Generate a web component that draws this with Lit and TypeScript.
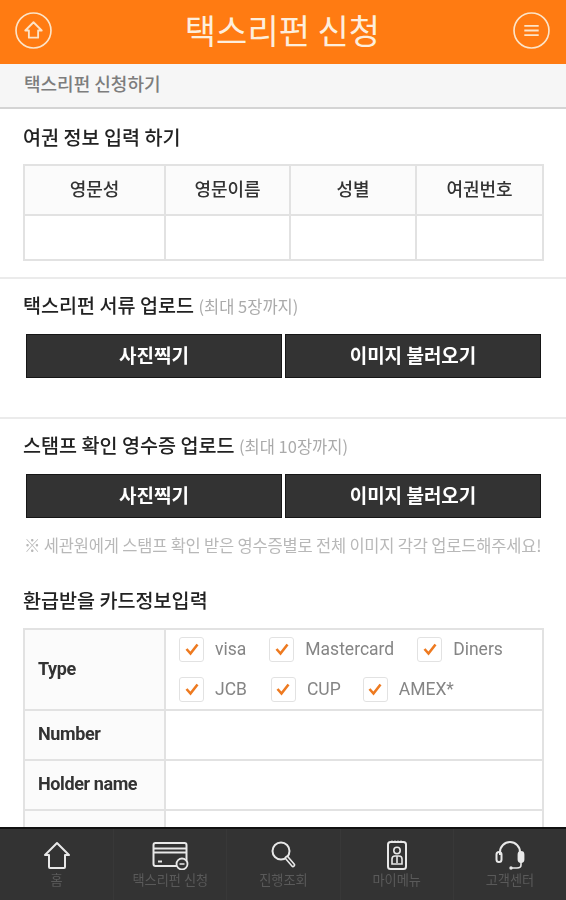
import { LitElement, html, css, svg } from "lit";
import { customElement } from "lit/decorators.js";

const navIcons = [
  svg`<path d="M3 15 L15 3 L27 15 L23 15 L23 27 Q23 28 22 28 L8 28 Q7 28 7 27 L7 15 Z" fill="none" stroke="currentColor" stroke-width="2" stroke-linejoin="round"/>`,
  svg`<rect x="1.500" y="3" width="33" height="23" rx="2" fill="none" stroke="currentColor" stroke-width="2"/><path d="M2 8.500H34M2 12.500H34" stroke="currentColor" stroke-width="2"/><path d="M6 21.500H10" stroke="currentColor" stroke-width="2"/><circle cx="30" cy="24" r="5.500" fill="#333" stroke="currentColor" stroke-width="1.800"/><path d="M27.500 24H32.500" stroke="currentColor" stroke-width="1.500"/>`,
  svg`<circle cx="11" cy="11" r="8.500" fill="none" stroke="currentColor" stroke-width="2"/><path d="M17 18 L23 25" stroke="currentColor" stroke-width="4.500" stroke-linecap="round"/><path d="M17 18 L23 25" stroke="#333" stroke-width="1.300" stroke-linecap="round"/>`,
  svg`<rect x="3" y="3" width="18" height="27" rx="2.500" fill="none" stroke="currentColor" stroke-width="2"/><path d="M7 1.500V4M10 1.500V4M13 1.500V4M16 1.500V4" stroke="currentColor" stroke-width="1.200"/><circle cx="12" cy="11.500" r="3.200" fill="none" stroke="currentColor" stroke-width="1.600"/><path d="M7 25V20Q7 17 10 17H14Q17 17 17 20V25Z" fill="none" stroke="currentColor" stroke-width="1.600"/><path d="M12 17V24" stroke="currentColor" stroke-width="1.600"/>`,
  svg`<path d="M6 15V12A10 10 0 0 1 26 12V15" fill="none" stroke="currentColor" stroke-width="2"/><rect x="2.500" y="12" width="5" height="10" rx="2.500" fill="none" stroke="currentColor" stroke-width="2"/><rect x="24.500" y="12" width="5" height="10" rx="2.500" fill="currentColor" stroke="currentColor" stroke-width="1.800"/><path d="M27 22V25Q27 28 23 28H18" fill="none" stroke="currentColor" stroke-width="1.600"/><circle cx="17" cy="28" r="1.700" fill="currentColor"/>`,
];

const tabs: [string, number, number][] = [
  ["홈", 30, 30],
  ["택스리펀 신청", 37, 30],
  ["진행조회", 26, 30],
  ["마이메뉴", 24, 32],
  ["고객센터", 32, 31],
];

@customElement("app-root")
export class AppRoot extends LitElement {
  static styles = css`
    :host {
      display: block;
      width: 566px;
      height: 900px;
      overflow: hidden;
      background: #fff;
      font-family: "Noto Sans CJK KR", "Noto Sans", sans-serif;
    }
    .page { height: 900px; display: flex; flex-direction: column; filter: blur(0.5px); }
    .top {
      height: 64px; flex: none; background: #ff7b12; color: #fdeedd;
      display: flex; align-items: center; justify-content: space-between;
      padding: 0 16px 4px 15px; box-sizing: border-box;
    }
    .top h1 { margin: 0 0 1px; font-size: 34px; font-weight: 400; line-height: 1; }
    .round { width: 37px; height: 37px; display: block; }
    .sub {
      height: 45px; flex: none; box-sizing: border-box; background: #f6f6f6;
      border-bottom: 2px solid #d4d4d4; padding: 0 0 6px 24px;
      display: flex; align-items: center; font-size: 18px; font-weight: 500; color: #7d7d7d;
    }
    .body { flex: 1; min-height: 0; overflow: hidden; }
    .sec { padding: 0 23px; }
    h2 { margin: 0; font-size: 19.600px; font-weight: 500; color: #222; line-height: 28px; }
    h2 small { font-size: 16.500px; font-weight: 400; color: #aaa; }
    .passport { padding-top: 14px; padding-bottom: 16px; border-bottom: 2px solid #ebebeb; }
    table { border-collapse: collapse; table-layout: fixed; width: 519px; }
    td, th { border: 2px solid #e2e2e2; padding: 0; }
    .passport table { margin-top: 13px; }
    .passport th { height: 50px; padding-bottom: 5px; box-sizing: border-box; background: #fbfbfb; font-size: 18px; font-weight: 500; color: #333; }
    .passport td { height: 43px; }
    .upload { height: 140px; box-sizing: border-box; padding-top: 12px; border-bottom: 2px solid #ebebeb; }
    .upload.last { height: auto; border-bottom: 0; }
    .btns { display: flex; gap: 3px; margin: 14px 2px 0 3px; }
    .btn {
      flex: 1; height: 44px; box-sizing: border-box; background: #333; border: 1px solid #161616;
      padding-bottom: 4px; color: #fff; font-size: 19px; font-weight: 700;
      display: flex; align-items: center; justify-content: center;
    }
    .note { margin: 15px 0 0 1px; font-size: 16.500px; line-height: 24px; color: #b8b8b8; white-space: nowrap; letter-spacing: -0.2px; }
    .card-title { padding-top: 29px; }
    .card { margin-top: 14px; }
    .card th {
      background: #fbfbfb; text-align: left; padding: 0 0 3px 13px; box-sizing: border-box;
      font-family: Roboto, sans-serif; font-size: 18px; font-weight: 700; color: #333; letter-spacing: -0.4px;
    }
    .card tr { height: 50px; }
    .opts { padding: 7px 13px 8px; display: flex; flex-direction: column; gap: 16px; }
    .opt-row { display: flex; }
    .opt { display: flex; align-items: center; gap: 11px; font-family: Roboto, sans-serif; font-size: 17.500px; color: #858585; height: 24px; }
    .box {
      width: 25px; height: 25px; box-sizing: border-box; background: #fff; border: 1.500px solid #e2e2e2;
      border-radius: 3px; display: flex; align-items: center; justify-content: center;
    }
    .box svg { width: 14px; height: 14px; }
    .nav {
      flex: none; height: 73px; background: #333; border-top: 2px solid #111; box-sizing: border-box;
      display: grid; grid-template-columns: repeat(5, 1fr);
    }
    .tab {
      display: flex; flex-direction: column; align-items: center; padding-top: 10px; box-sizing: border-box;
      color: #e8e8e8; border-left: 1px solid #383838;
    }
    .tab:first-child { border-left: 0; }
    .tab .ic { height: 32px; display: flex; align-items: center; justify-content: center; }
    .tab span { font-size: 13.200px; line-height: 17px; color: #5a5a5a; white-space: nowrap; }
  `;

  private check(label: string, gapAfter: number) {
    return html`<div class="opt" style="margin-right:${gapAfter}px">
      <div class="box"><svg viewBox="0 0 14 14"><path d="M1.500 7 L5.500 11.500 L12.500 2.500" fill="none" stroke="#ee7a20" stroke-width="2.600"/></svg></div>
      ${label}
    </div>`;
  }

  render() {
    return html`<div class="page">
      <header class="top">
        <svg class="round" viewBox="0 0 36 36" fill="none" stroke="#fce4c8" stroke-width="1.600">
          <circle cx="18" cy="18" r="17"/>
          <path d="M18 10 L26 18 L22.500 18 L22.500 25 L13.500 25 L13.500 18 L10 18 Z" stroke-width="1.800" stroke-linejoin="round"/>
        </svg>
        <h1>택스리펀 신청</h1>
        <svg class="round" viewBox="0 0 36 36" fill="none" stroke="#fce4c8" stroke-width="1.600">
          <circle cx="18" cy="18" r="17"/>
          <path d="M11 13.500H25M11 18H25M11 22.500H25" stroke-width="1.800"/>
        </svg>
      </header>
      <div class="sub">택스리펀 신청하기</div>
      <main class="body">
        <section class="sec passport">
          <h2>여권 정보 입력 하기</h2>
          <table>
            <colgroup><col style="width:141px"/><col style="width:125px"/><col style="width:126px"/><col style="width:127px"/></colgroup>
            <tr><th>영문성</th><th>영문이름</th><th>성별</th><th>여권번호</th></tr>
            <tr><td></td><td></td><td></td><td></td></tr>
          </table>
        </section>
        <section class="sec upload">
          <h2>택스리펀 서류 업로드 <small>(최대 5장까지)</small></h2>
          <div class="btns"><div class="btn">사진찍기</div><div class="btn">이미지 불러오기</div></div>
        </section>
        <section class="sec upload last">
          <h2>스탬프 확인 영수증 업로드 <small>(최대 10장까지)</small></h2>
          <div class="btns"><div class="btn">사진찍기</div><div class="btn">이미지 불러오기</div></div>
          <p class="note">※ 세관원에게 스탬프 확인 받은 영수증별로 전체 이미지 각각 업로드해주세요!</p>
        </section>
        <section class="sec card-title">
          <h2>환급받을 카드정보입력</h2>
          <table class="card">
            <colgroup><col style="width:141px"/><col style="width:378px"/></colgroup>
            <tr>
              <th>Type</th>
              <td><div class="opts">
                <div class="opt-row">${this.check("visa", 23)}${this.check("Mastercard", 23)}${this.check("Diners", 0)}</div>
                <div class="opt-row">${this.check("JCB", 24)}${this.check("CUP", 22)}${this.check("AMEX*", 0)}</div>
              </div></td>
            </tr>
            <tr><th>Number</th><td></td></tr>
            <tr><th>Holder name</th><td></td></tr>
            <tr><th></th><td></td></tr>
          </table>
        </section>
      </main>
      <nav class="nav">
        ${tabs.map(([label, w, h], i) => html`<div class="tab">
          <div class="ic"><svg width=${w} height=${h} viewBox="0 0 ${w} ${h}">${navIcons[i]}</svg></div>
          <span>${label}</span>
        </div>`)}
      </nav>
    </div>`;
  }
}
